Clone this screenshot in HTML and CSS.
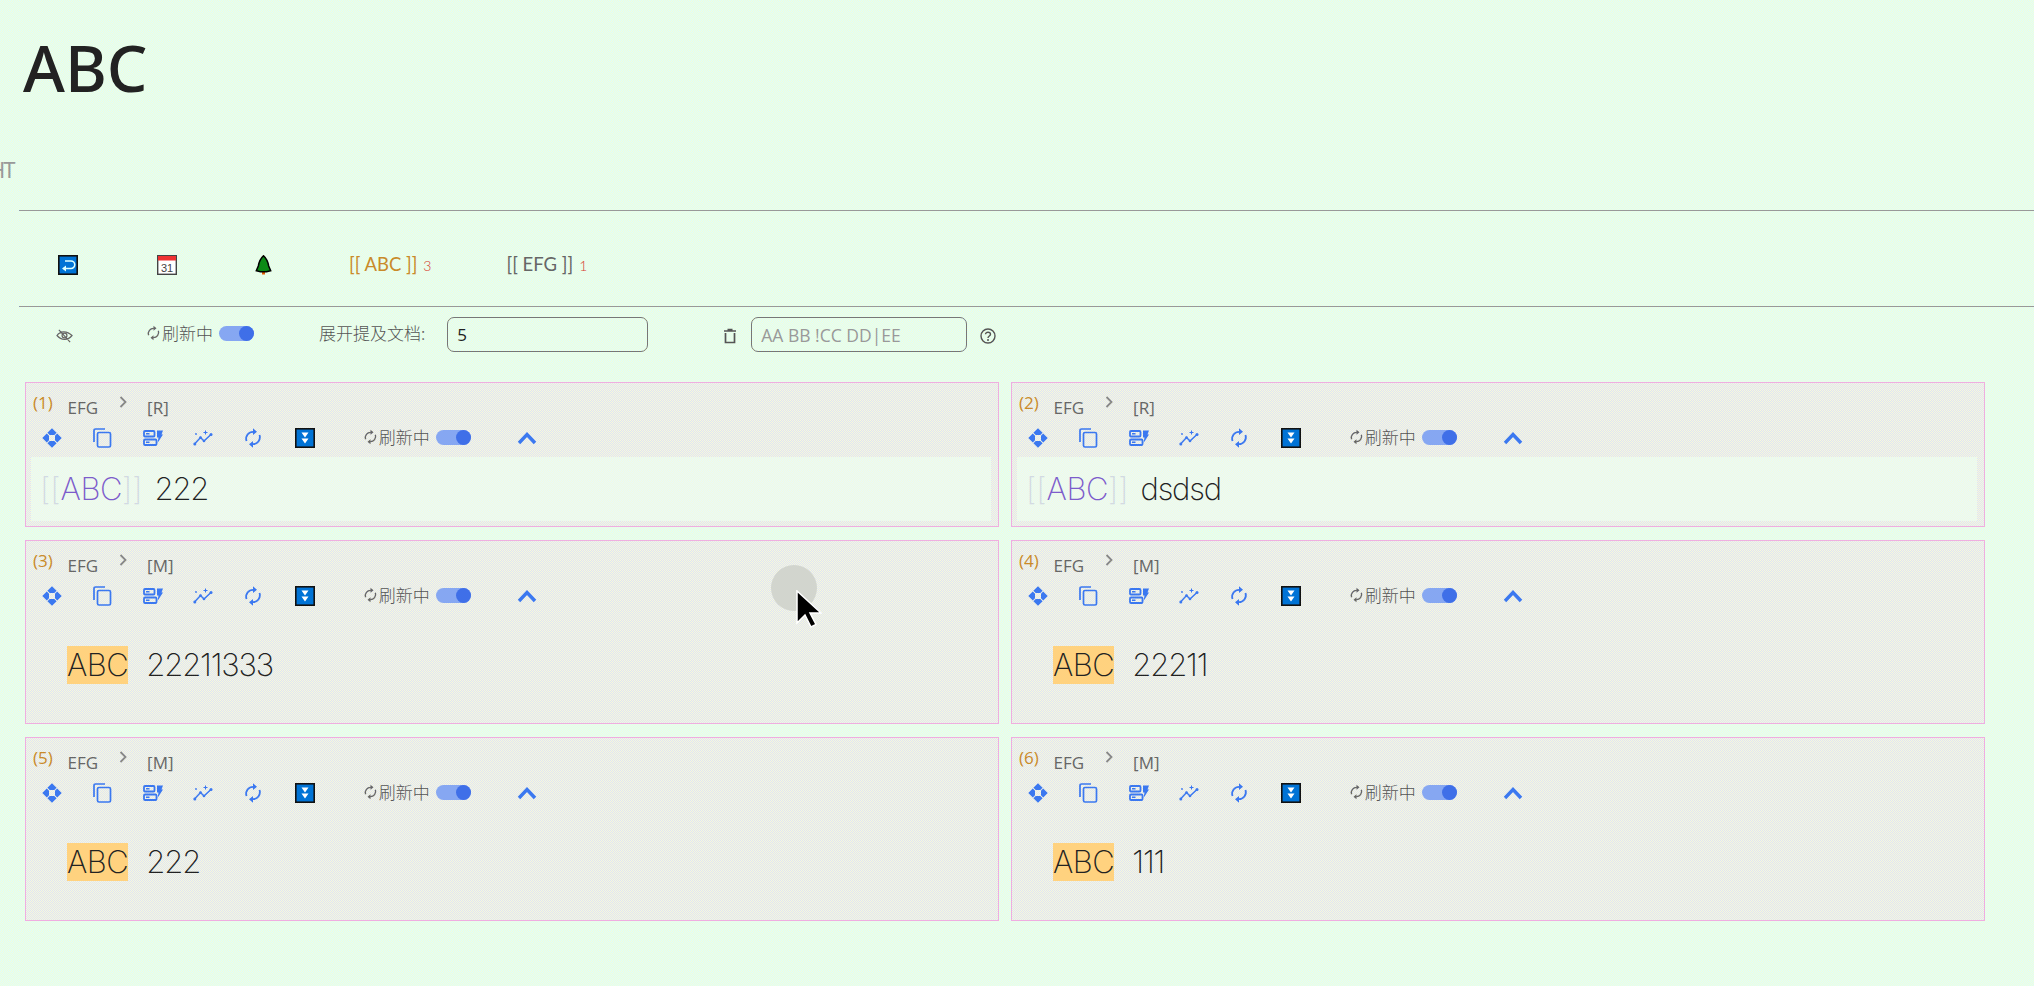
FILE: index.html
```html
<!DOCTYPE html>
<html lang="zh">
<head>
<meta charset="utf-8">
<title>ABC</title>
<link rel="stylesheet" href="styles.css">
</head>
<body>
<svg class="defs" aria-hidden="true">
  <symbol id="i-move" viewBox="0 0 20 20"><path fill="currentColor" d="M10 .3 14.600 4.800 12.300 7H7.700L5.400 4.800ZM10 19.700 5.400 15.200 7.700 13H12.300L14.600 15.200ZM.3 10 4.800 5.400 7 7.700V12.300L4.800 14.600ZM19.700 10 15.200 14.600 13 12.300V7.700L15.200 5.400Z"/></symbol>
  <symbol id="i-copy" viewBox="0 0 20 20"><path fill="none" stroke="currentColor" stroke-width="1.700" d="M2 14V2.500C2 1.600 2.600 1 3.500 1H13"/><rect x="5.500" y="4.500" width="13" height="14.500" rx="1.500" fill="none" stroke="currentColor" stroke-width="1.700"/></symbol>
  <symbol id="i-serv" viewBox="0 0 20 20"><g fill="none" stroke="currentColor" stroke-width="1.800"><rect x="1" y="3" width="10.500" height="5.500" rx="1"/><rect x="1" y="11.500" width="12.500" height="5.500" rx="1"/></g><path fill="currentColor" d="M3 5h3.500v1.500H3ZM3 13.500h3.500V15H3ZM14 2.500h6l-1.500 4H20l-5.500 8.500 1-5.500H14Z"/></symbol>
  <symbol id="i-trend" viewBox="0 0 20 20"><path fill="none" stroke="currentColor" stroke-width="1.500" d="M1.500 16 7.500 9.500 11 13 18 6.500"/><g fill="currentColor"><circle cx="1.800" cy="16" r="1.500"/><circle cx="7.500" cy="9.500" r="1.300"/><circle cx="11" cy="13" r="1.300"/><circle cx="18" cy="6.500" r="1.500"/><circle cx="3" cy="6" r=".9"/><path d="M12 2.500h1v1.500h1.500v1H13v1.500h-1V5h-1.500V4H12Z"/></g></symbol>
  <symbol id="i-sync" viewBox="0 0 20 20"><g fill="none" stroke="currentColor" stroke-width="1.800"><path d="M3.500 13A7 7 0 0 1 10.500 3.800"/><path d="M16.500 7A7 7 0 0 1 9.500 16.200"/></g><path fill="currentColor" d="M10 .3 14 3.800 10 7ZM10 13 6 16.200 10 19.700Z"/></symbol>
  <symbol id="i-down" viewBox="0 0 20 20"><rect x=".8" y=".8" width="18.400" height="18.400" fill="#0073d6" stroke="#111" stroke-width="1.600"/><path fill="#fff" d="M6.500 4.500h7L10 9.500ZM6.500 10.500h7L10 15.500Z"/></symbol>
  <symbol id="i-up" viewBox="0 0 20 14"><path fill="none" stroke="currentColor" stroke-width="3.400" d="M2 12 10 3.500 18 12"/></symbol>
  <symbol id="i-gt" viewBox="0 0 8 12"><path fill="none" stroke="currentColor" stroke-width="1.800" d="M1.500 1 6.500 6 1.500 11"/></symbol>
</svg>

<main class="page">
  <h1 class="title">ABC</h1>
  <div class="clipped">HT</div>
  <hr class="rule">

  <nav class="tabs">
    <svg class="tab-icon first" viewBox="0 0 20 20"><rect x=".8" y=".8" width="18.400" height="18.400" fill="#0073d6" stroke="#111" stroke-width="1.600"/><path fill="none" stroke="#dff" stroke-width="1.500" d="M7 6h6a3 3 0 0 1 0 7.500H5.500"/><path fill="#dff" d="M8 10.500v6L4 13.500Z"/></svg>
    <svg class="tab-icon second" viewBox="0 0 20 20"><rect x=".7" y=".7" width="18.600" height="18.600" fill="#fff" stroke="#444" stroke-width="1.400"/><rect x="1" y="1" width="18" height="4.500" fill="#e33"/><text x="10" y="16.500" text-anchor="middle" class="cal-num">31</text></svg>
    <svg class="tab-icon third" viewBox="0 0 16 20"><path fill="#e25c00" d="M6.500 15h3v4.500h-3Z"/><path fill="#0c8a16" stroke="#000" stroke-width="1.500" d="M8 .8C10.500 3 12.500 7 13.200 11L15.200 15.800 11 16.800H5L.8 15.800 2.800 11C3.500 7 5.500 3 8 .8Z"/></svg>
    <a class="tab tab-abc">[[ ABC ]]<span class="count">3</span></a>
    <a class="tab tab-efg">[[ EFG ]]<span class="count">1</span></a>
  </nav>
  <hr class="rule">

  <section class="controls">
    <svg class="eye" viewBox="0 0 18 16"><path fill="none" stroke="#666" stroke-width="1.300" d="M1 8C4 3.500 11 2 17 8 13 13 6 14 1 8ZM3 2 15 15"/><circle cx="9" cy="8" r="2.600" fill="none" stroke="#666" stroke-width="1.300"/></svg>
    <div class="refresh top-refresh">
      <svg class="sync-small"><use href="#i-sync"/></svg><span class="refresh-text">刷新中</span><span class="toggle"></span>
    </div>
    <label class="field-label">展开提及文档:</label>
    <input class="num-input" value="5">
    <svg class="trash" viewBox="0 0 14 16"><path fill="none" stroke="#555" stroke-width="1.700" d="M2.500 5v9.500h9V5M1 3h12M4.500 1.500h5"/></svg>
    <input class="filter-input" placeholder="AA BB !CC DD|EE">
    <svg class="help" viewBox="0 0 16 16"><circle cx="8" cy="8" r="7" fill="none" stroke="#555" stroke-width="1.400"/><path fill="none" stroke="#555" stroke-width="1.400" d="M5.500 6.300C5.500 3.500 10.500 3.500 10.500 6.300 10.500 8 8 8 8 10"/><circle cx="8" cy="12" r="1" fill="#555"/></svg>
  </section>

  <section class="cards">
    <article class="card card-r">
      <header class="card-head"><span class="idx">(1)</span><span class="crumb">EFG</span><svg class="gt"><use href="#i-gt"/></svg><span class="crumb">[R]</span></header>
      <div class="tools">
        <svg class="tool"><use href="#i-move"/></svg><svg class="tool"><use href="#i-copy"/></svg><svg class="tool"><use href="#i-serv"/></svg><svg class="tool"><use href="#i-trend"/></svg><svg class="tool"><use href="#i-sync"/></svg><svg class="tool"><use href="#i-down"/></svg>
        <div class="refresh"><svg class="sync-small"><use href="#i-sync"/></svg><span class="refresh-text">刷新中</span><span class="toggle"></span></div>
        <svg class="up"><use href="#i-up"/></svg>
      </div>
      <div class="band"><span class="br">[[</span><span class="ref">ABC</span><span class="br">]]</span><span class="val">222</span></div>
    </article>
    <article class="card card-r">
      <header class="card-head"><span class="idx">(2)</span><span class="crumb">EFG</span><svg class="gt"><use href="#i-gt"/></svg><span class="crumb">[R]</span></header>
      <div class="tools">
        <svg class="tool"><use href="#i-move"/></svg><svg class="tool"><use href="#i-copy"/></svg><svg class="tool"><use href="#i-serv"/></svg><svg class="tool"><use href="#i-trend"/></svg><svg class="tool"><use href="#i-sync"/></svg><svg class="tool"><use href="#i-down"/></svg>
        <div class="refresh"><svg class="sync-small"><use href="#i-sync"/></svg><span class="refresh-text">刷新中</span><span class="toggle"></span></div>
        <svg class="up"><use href="#i-up"/></svg>
      </div>
      <div class="band"><span class="br">[[</span><span class="ref">ABC</span><span class="br">]]</span><span class="val">dsdsd</span></div>
    </article>
    <article class="card card-m">
      <header class="card-head"><span class="idx">(3)</span><span class="crumb">EFG</span><svg class="gt"><use href="#i-gt"/></svg><span class="crumb">[M]</span></header>
      <div class="tools">
        <svg class="tool"><use href="#i-move"/></svg><svg class="tool"><use href="#i-copy"/></svg><svg class="tool"><use href="#i-serv"/></svg><svg class="tool"><use href="#i-trend"/></svg><svg class="tool"><use href="#i-sync"/></svg><svg class="tool"><use href="#i-down"/></svg>
        <div class="refresh"><svg class="sync-small"><use href="#i-sync"/></svg><span class="refresh-text">刷新中</span><span class="toggle"></span></div>
        <svg class="up"><use href="#i-up"/></svg>
      </div>
      <div class="mark-line"><mark class="hl">ABC</mark><span class="val">22211333</span></div>
    </article>
    <article class="card card-m">
      <header class="card-head"><span class="idx">(4)</span><span class="crumb">EFG</span><svg class="gt"><use href="#i-gt"/></svg><span class="crumb">[M]</span></header>
      <div class="tools">
        <svg class="tool"><use href="#i-move"/></svg><svg class="tool"><use href="#i-copy"/></svg><svg class="tool"><use href="#i-serv"/></svg><svg class="tool"><use href="#i-trend"/></svg><svg class="tool"><use href="#i-sync"/></svg><svg class="tool"><use href="#i-down"/></svg>
        <div class="refresh"><svg class="sync-small"><use href="#i-sync"/></svg><span class="refresh-text">刷新中</span><span class="toggle"></span></div>
        <svg class="up"><use href="#i-up"/></svg>
      </div>
      <div class="mark-line"><mark class="hl">ABC</mark><span class="val">22211</span></div>
    </article>
    <article class="card card-m">
      <header class="card-head"><span class="idx">(5)</span><span class="crumb">EFG</span><svg class="gt"><use href="#i-gt"/></svg><span class="crumb">[M]</span></header>
      <div class="tools">
        <svg class="tool"><use href="#i-move"/></svg><svg class="tool"><use href="#i-copy"/></svg><svg class="tool"><use href="#i-serv"/></svg><svg class="tool"><use href="#i-trend"/></svg><svg class="tool"><use href="#i-sync"/></svg><svg class="tool"><use href="#i-down"/></svg>
        <div class="refresh"><svg class="sync-small"><use href="#i-sync"/></svg><span class="refresh-text">刷新中</span><span class="toggle"></span></div>
        <svg class="up"><use href="#i-up"/></svg>
      </div>
      <div class="mark-line"><mark class="hl">ABC</mark><span class="val">222</span></div>
    </article>
    <article class="card card-m">
      <header class="card-head"><span class="idx">(6)</span><span class="crumb">EFG</span><svg class="gt"><use href="#i-gt"/></svg><span class="crumb">[M]</span></header>
      <div class="tools">
        <svg class="tool"><use href="#i-move"/></svg><svg class="tool"><use href="#i-copy"/></svg><svg class="tool"><use href="#i-serv"/></svg><svg class="tool"><use href="#i-trend"/></svg><svg class="tool"><use href="#i-sync"/></svg><svg class="tool"><use href="#i-down"/></svg>
        <div class="refresh"><svg class="sync-small"><use href="#i-sync"/></svg><span class="refresh-text">刷新中</span><span class="toggle"></span></div>
        <svg class="up"><use href="#i-up"/></svg>
      </div>
      <div class="mark-line"><mark class="hl">ABC</mark><span class="val">111</span></div>
    </article>
  </section>
</main>

<div class="click-ring"></div>
<svg class="cursor" viewBox="0 0 26 38"><path fill="#000" stroke="#fff" stroke-width="1.500" d="M1 1V33L9 25 15 37 20 34.500 14 23H25Z"/></svg>
</body>
</html>
```
FILE: styles.css
```css
* { box-sizing: border-box; }

html, body {
  margin: 0;
  height: 986px;
  overflow: hidden;
}

body {
  position: relative;
  background: repeating-conic-gradient(#f4ffd6 0 25%, #dcfbff 0 50%) 0 0 / 2px 2px;
  font-family: "Open Sans", "Noto Sans CJK SC", sans-serif;
  color: #666;
}

.defs { position: absolute; width: 0; height: 0; }

.page { display: flex; flex-direction: column; }

.title {
  margin: 32px 0 0 23px;
  height: 72px;
  font: 500 64px/72px "Noto Sans", sans-serif;
  color: #222;
}

.clipped {
  margin: 53px 0 28px -11px;
  height: 25px;
  font: 400 22px/25px "Noto Sans", sans-serif;
  letter-spacing: -2px;
  color: #999;
}

.rule {
  width: calc(100% - 19px);
  margin: 0 0 0 19px;
  border: 0;
  border-top: 1px solid #999;
  height: 1px;
}

.tabs {
  display: flex;
  align-items: center;
  height: 95px;
  padding-top: 13px;
}

.tab-icon { flex: none; height: 20px; }
.tab-icon.first { width: 20px; margin-left: 58px; }
.tab-icon.second { width: 20px; margin-left: 79px; }
.tab-icon.third { width: 17px; margin-left: 78px; }

.cal-num { font: 11px "Liberation Sans", sans-serif; fill: #444; }

.tab {
  flex: none;
  font: 400 18.500px/20px "Lato", sans-serif;
  white-space: nowrap;
}
.tab-abc { margin-left: 77px; color: #c98a2a; }
.tab-efg { margin-left: 75px; color: #666; }
.count { font-size: 14px; font-weight: 300; color: #d63c2e; margin-left: 6px; }

.controls {
  display: flex;
  align-items: center;
  height: 75px;
  padding: 10px 0 30px;
}

.eye { flex: none; width: 17px; height: 15px; margin-left: 56px; margin-top: 2px; }

.refresh { display: flex; align-items: center; flex: none; }
.top-refresh { margin-left: 73px; margin-top: -3px; }

.sync-small { width: 15px; height: 16px; color: #666; flex: none; }

.refresh-text {
  font: 300 17px/20px "Noto Sans CJK SC", sans-serif;
  color: #555;
  margin-left: 1px;
}

.toggle {
  position: relative;
  width: 35px;
  height: 15px;
  margin-left: 6px;
  margin-top: 1px;
  border-radius: 8px;
  background: #86a7f2;
}
.toggle::after {
  content: "";
  position: absolute;
  right: 0;
  top: 0;
  width: 15px;
  height: 15px;
  border-radius: 50%;
  background: #3f6fe8;
}

.field-label {
  flex: none;
  margin-left: 65px;
  margin-top: -3px;
  font: 300 17px/20px "Noto Sans CJK SC", sans-serif;
  color: #555;
}

.num-input, .filter-input {
  flex: none;
  height: 35px;
  border: 1px solid #777;
  border-radius: 7px;
  background: transparent;
  outline: 0;
  font: 400 17px "Open Sans", sans-serif;
  color: #222;
  padding: 0 9px;
}
.num-input { width: 201px; margin-left: 22px; }
.filter-input { width: 216px; margin-left: 14px; font-size: 17.500px; }
.filter-input::placeholder { color: #999; opacity: 1; }

.trash { flex: none; width: 14px; height: 16px; margin-left: 75px; margin-top: 3px; }
.help { flex: none; width: 16px; height: 16px; margin-left: 13px; margin-top: 3px; }

.cards {
  display: grid;
  grid-template-columns: 974px 974px;
  grid-template-rows: 145px 184px 184px;
  column-gap: 12px;
  row-gap: 13px;
  margin: 0 0 0 25px;
}

.card {
  display: flex;
  flex-direction: column;
  border: 1px solid #efaee0;
  background: repeating-conic-gradient(#f7f9dc 0 25%, #dfe3f4 0 50%) 0 0 / 2px 2px;
}

.card-head {
  display: flex;
  align-items: flex-start;
  height: 40px;
  padding: 10px 0 0 7px;
  flex: none;
}

.idx { width: 34.500px; font: 400 17px/20px "Open Sans", sans-serif; color: #c98a2a; }

.crumb { font: 400 17px/20px "Open Sans", sans-serif; color: #666; margin-top: 5px; }

.gt { width: 8px; height: 12px; margin: 3px 20px 0 21px; color: #888; flex: none; }

.tools {
  display: flex;
  align-items: center;
  height: 30px;
  flex: none;
  color: #3b78f0;
  padding-left: 16px;
}

.tool { width: 20px; height: 20px; margin-right: 30.300px; flex: none; }
.tool:nth-child(5) { margin-right: 32.300px; }

.tools .refresh { margin-left: 17px; margin-top: -2px; }

.up { width: 20px; height: 14px; margin-left: 46px; flex: none; color: #3b78f0; }

.band {
  display: flex;
  align-items: center;
  height: 64px;
  margin: 4px 7px 0 5px;
  padding-left: 9px;
  background: repeating-conic-gradient(#f4fbdf 0 25%, #e6f8fb 0 50%) 0 0 / 2px 2px;
}

.br { font: 200 31px/40px "Inter", sans-serif; color: #d2dae2; }
.ref { font: 200 31px/40px "Inter", sans-serif; letter-spacing: -.5px; color: #7d5ccb; }

.val {
  margin-left: 12px;
  font: 200 31px/40px "Inter", sans-serif;
  letter-spacing: -1.200px;
  color: #222;
}

.mark-line {
  display: flex;
  align-items: center;
  margin: 35px 0 0 41px;
  height: 38px;
}

.hl {
  height: 38px;
  padding: 0;
  font: 200 31px/38px "Inter", sans-serif;
  letter-spacing: -.5px;
  color: #222;
  background: #ffd27f;
}
.mark-line .val { margin-left: 18px; }

.click-ring {
  position: absolute;
  left: 771px;
  top: 565px;
  width: 46px;
  height: 46px;
  border-radius: 50%;
  background: #d2d5ce;
}

.cursor {
  position: absolute;
  left: 796px;
  top: 590px;
  width: 26px;
  height: 38px;
}
```
